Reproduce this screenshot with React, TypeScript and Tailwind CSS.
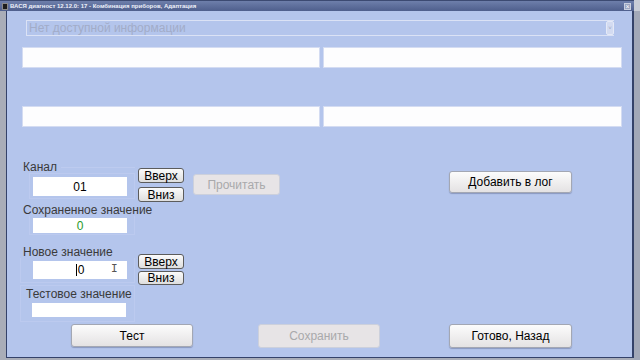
import React from "react";

const font = "font-['Liberation_Sans',Arial,sans-serif]";

function SmallBtn({ label, h }: { label: string; h: string }) {
  return (
    <div
      className={`w-[46px] ${h} flex items-center justify-center rounded-[3px] border border-[#5c5c5c] bg-gradient-to-b from-[#fbfbfb] to-[#dedede] text-[12px] leading-[12px] text-black`}
    >
      {label}
    </div>
  );
}

function BigBtn({ label, w, h, disabled }: { label: string; w: string; h: string; disabled?: boolean }) {
  return disabled ? (
    <div
      className={`${w} ${h} flex items-center justify-center rounded-[3px] border border-[#ccd0dc] bg-[#e7e4e6] text-[12px] leading-[12px] text-[#a9a9ab]`}
    >
      {label}
    </div>
  ) : (
    <div
      className={`${w} ${h} flex items-center justify-center rounded-[3px] border border-[#a3a7b3] bg-gradient-to-b from-[#fcfcfc] to-[#e4e2e3] text-[12px] leading-[12px] text-black shadow-[0_1px_1px_rgba(60,70,110,0.35)]`}
    >
      {label}
    </div>
  );
}

function Label({ text, pl }: { text: string; pl: string }) {
  return (
    <div className={`h-[12px] ${pl} text-[12px] leading-[12px] text-[#3a3a3a] whitespace-nowrap`}>{text}</div>
  );
}

export default function App() {
  return (
    <div className={`w-[640px] h-[360px] flex bg-[#a6aab6] overflow-hidden ${font}`}>
      <div className="w-[634px] flex flex-col">
        {/* title bar */}
        <div className="h-[11px] flex items-center bg-gradient-to-b from-[#6e7fab] to-[#4f5f8d] border-t border-[#3c4a72]">
          <div className="ml-[2px] w-[6px] h-[7px] bg-[#1d1d1d] border border-[#8a8a8a]" />
          <div className="ml-[2px] text-[6px] leading-[8px] font-bold text-[#eef1fa] whitespace-nowrap">
            ВАСЯ диагност 12.12.0: 17 - Комбинация приборов, Адаптация
          </div>
          <div className="flex-1" />
          <div className="mr-[3px] w-[7px] h-[7px] border border-[#c9cfdf] bg-[#9aa4c0] flex items-center justify-center text-[7px] leading-[7px] text-white">
            ×
          </div>
        </div>
        <div className="flex flex-1">
          <div className="w-[6px] bg-[#a9adb8]" />
          <div className="flex-1 flex flex-col bg-[#b4c5ec] border-l border-r-2 border-b border-[#34426a]">
            {/* dropdown */}
            <div className="mt-[9px] ml-[19px] w-[588px] h-[16px] flex items-center border-t border-b border-l border-[#dbe2f5]">
              <div className="pl-[2px] text-[12px] leading-[12px] text-[#a2acc8] whitespace-nowrap">
                Нет доступной информации
              </div>
              <div className="flex-1" />
              <div className="w-[8px] h-[14px] bg-[#d3dbf1] border border-[#e4e9f7] rounded-[2px] flex items-center justify-center text-[6px] text-[#9aa3bd]">
                ˅
              </div>
            </div>
            {/* rows of white boxes */}
            <div className="mt-[11px] ml-[15px] flex gap-[3px]">
              <div className="w-[298px] h-[21px] bg-[#fdfdfe] border border-[#d4dcf2]" />
              <div className="w-[299px] h-[21px] bg-[#fdfdfe] border border-[#d4dcf2]" />
            </div>
            <div className="mt-[38px] ml-[15px] flex gap-[3px]">
              <div className="w-[298px] h-[21px] bg-[#fdfdfe] border border-[#d4dcf2]" />
              <div className="w-[299px] h-[21px] bg-[#fdfdfe] border border-[#d4dcf2]" />
            </div>

            {/* section A: channel */}
            <div className="mt-[34px] flex items-start">
              <div className="ml-[13px] w-[115px] flex flex-col">
                <div className="flex items-center">
                  <Label text="Канал" pl="pl-[3px]" />
                  <div className="flex-1 ml-[4px] h-px bg-[#bdcbef]" />
                </div>
                <div className="ml-[9px] pt-[3px] pb-[2px] pl-[3px] pr-[8px] border border-[#bccaef]">
                  <div className="w-[94px] h-[19px] bg-white flex items-center justify-center text-[12px] leading-[12px] text-black">
                    01
                  </div>
                </div>
              </div>
              <div className="ml-[3px] mt-[7px] flex flex-col gap-[4px]">
                <SmallBtn label="Вверх" h="h-[15px]" />
                <SmallBtn label="Вниз" h="h-[15px]" />
              </div>
              <div className="ml-[9px] mt-[13px]">
                <BigBtn label="Прочитать" w="w-[87px]" h="h-[21px]" disabled />
              </div>
              <div className="ml-[169px] mt-[10px]">
                <BigBtn label="Добавить в лог" w="w-[123px]" h="h-[22px]" />
              </div>
            </div>

            {/* section B: saved value */}
            <div className="mt-[2px] ml-[13px] w-[115px] flex flex-col">
              <Label text="Сохраненное значение" pl="pl-[3px]" />
              <div className="ml-[9px] pt-[2px] pb-[1px] pl-[3px] pr-[8px] border-l border-r border-b border-[#bccaef]">
                <div className="w-[94px] h-[15px] bg-white flex items-center justify-center text-[12px] leading-[12px] text-[#2a9a2a]">
                  0
                </div>
              </div>
            </div>

            {/* section C: new value */}
            <div className="mt-[11px] flex items-start">
              <div className="ml-[13px] w-[115px] flex flex-col">
                <Label text="Новое значение" pl="pl-[3px]" />
                <div className="pt-[3px] pb-[3px] pl-[12px] pr-[8px] border border-[#bccaef] border-t-0">
                  <div className="relative w-[94px] h-[18px] bg-white flex items-center justify-center text-[12px] leading-[12px] text-black">
                    <span className="w-px h-[12px] bg-black mr-px" />
                    <span>0</span>
                    <span className="absolute left-[78px] top-[1px] text-[11px] leading-[14px] text-[#555] font-['DejaVu_Sans_Mono',monospace]">
                      I
                    </span>
                  </div>
                </div>
              </div>
              <div className="ml-[3px] mt-[8px] flex flex-col gap-[2px]">
                <SmallBtn label="Вверх" h="h-[15px]" />
                <SmallBtn label="Вниз" h="h-[14px]" />
              </div>
            </div>

            {/* section D: test value */}
            <div className="ml-[13px] w-[115px] flex flex-col border border-[#bccaef] pt-[2px] pb-[4px]">
              <Label text="Тестовое значение" pl="pl-[5px]" />
              <div className="mt-[3px] ml-[11px] w-[94px] h-[14px] bg-white" />
            </div>

            {/* section E: bottom buttons */}
            <div className="mt-[2px] flex items-start">
              <div className="ml-[64px]">
                <BigBtn label="Тест" w="w-[122px]" h="h-[23px]" />
              </div>
              <div className="ml-[65px]">
                <BigBtn label="Сохранить" w="w-[122px]" h="h-[24px]" disabled />
              </div>
              <div className="ml-[69px]">
                <BigBtn label="Готово, Назад" w="w-[123px]" h="h-[24px]" />
              </div>
            </div>
          </div>
        </div>
        <div className="h-[2px] bg-[#a9adb8]" />
      </div>
      <div className="w-[6px] bg-[#a2a8b8] flex flex-col">
        <div className="h-[11px] bg-[#c8ccd6]" />
      </div>
    </div>
  );
}
